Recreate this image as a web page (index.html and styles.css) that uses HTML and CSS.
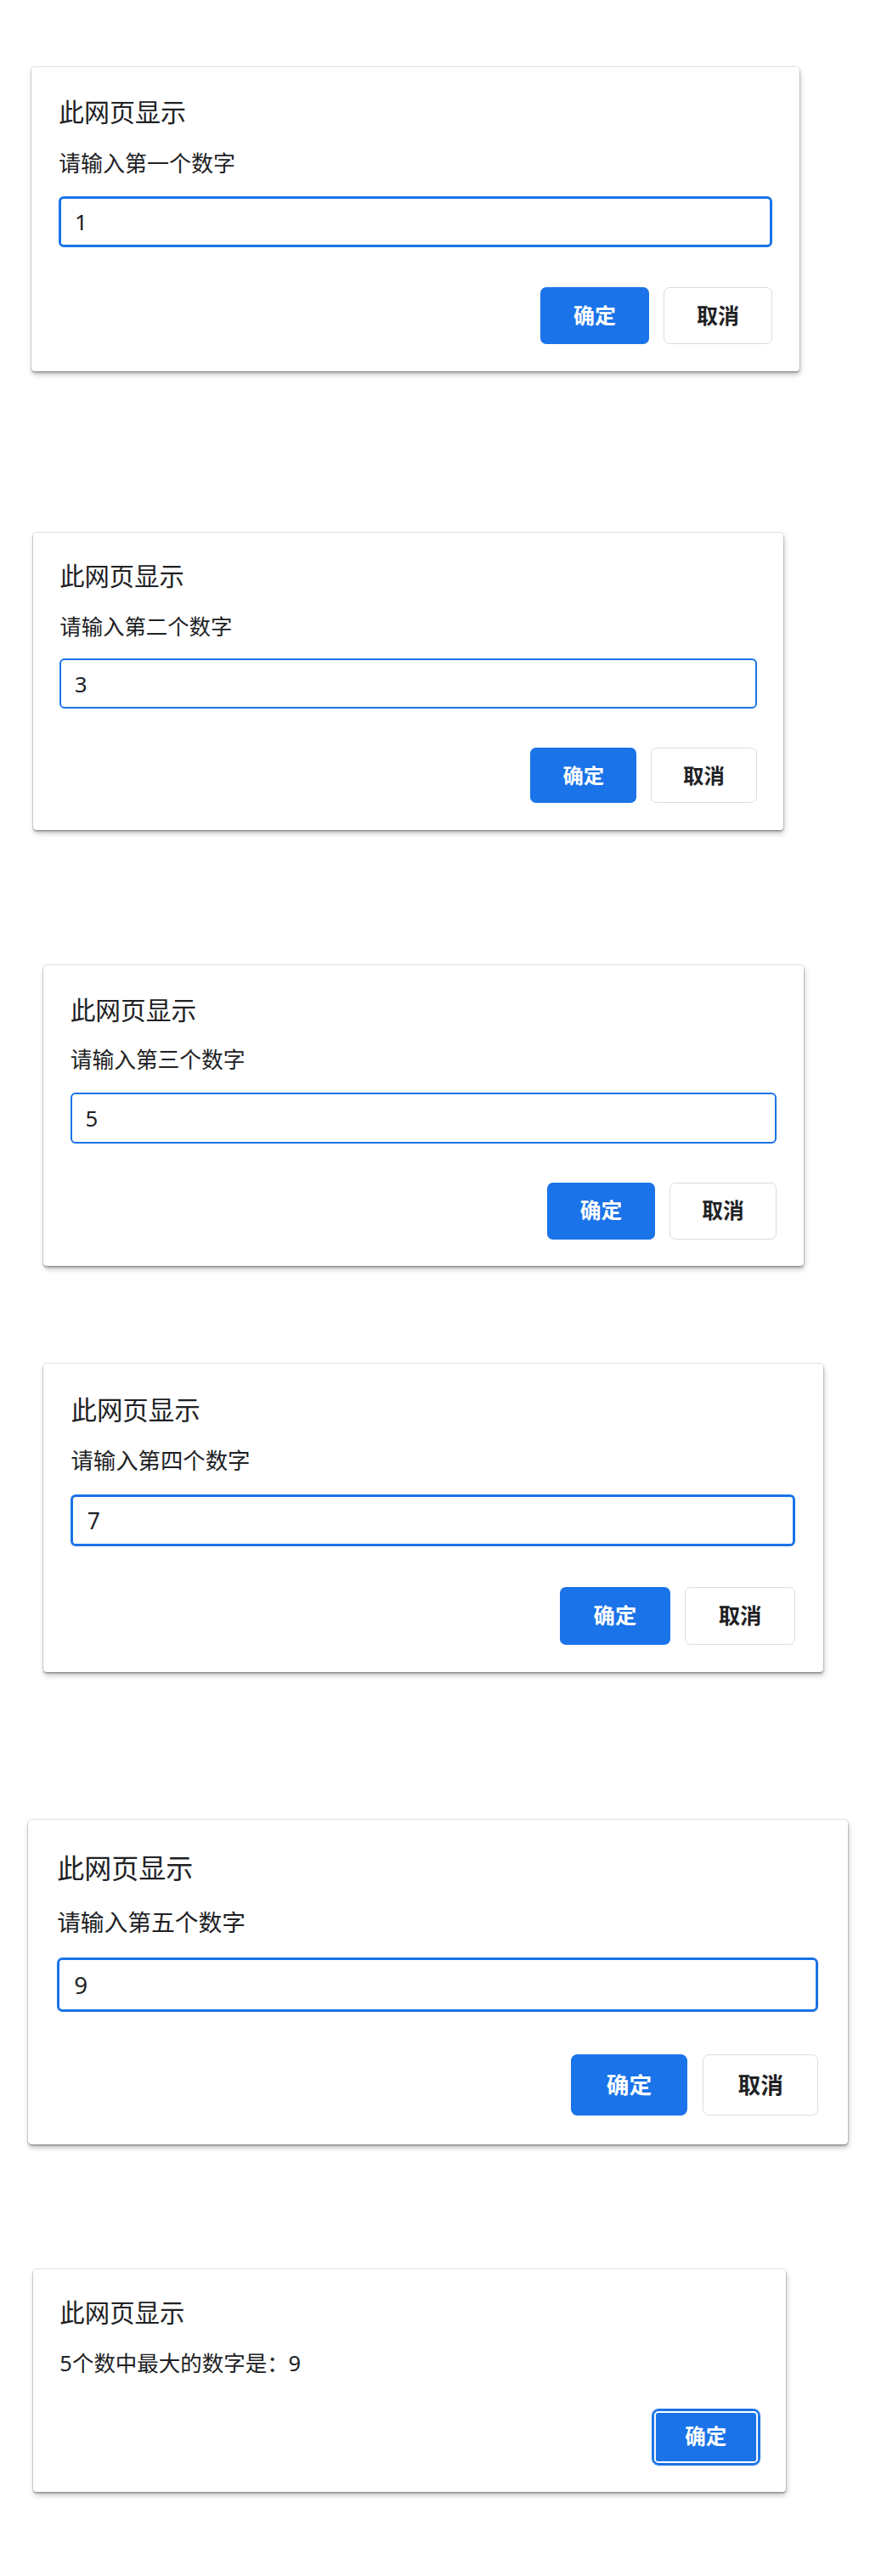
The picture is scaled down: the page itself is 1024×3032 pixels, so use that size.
FILE: index.html
```html
<!DOCTYPE html>
<html lang="zh-CN">
<head>
<meta charset="utf-8">
<title>此网页显示</title>
<link rel="stylesheet" href="styles.css">
</head>
<body>
<main class="page">
  <section class="shot shot-1">
    <div class="dialog">
      <h2 class="title">此网页显示</h2>
      <p class="message">请输入第一个数字</p>
      <div class="field">1</div>
      <div class="actions">
        <button class="btn btn-primary">确定</button>
        <button class="btn btn-secondary">取消</button>
      </div>
    </div>
  </section>
  <section class="shot shot-2">
    <div class="dialog">
      <h2 class="title">此网页显示</h2>
      <p class="message">请输入第二个数字</p>
      <div class="field">3</div>
      <div class="actions">
        <button class="btn btn-primary">确定</button>
        <button class="btn btn-secondary">取消</button>
      </div>
    </div>
  </section>
  <section class="shot shot-3">
    <div class="dialog">
      <h2 class="title">此网页显示</h2>
      <p class="message">请输入第三个数字</p>
      <div class="field">5</div>
      <div class="actions">
        <button class="btn btn-primary">确定</button>
        <button class="btn btn-secondary">取消</button>
      </div>
    </div>
  </section>
  <section class="shot shot-4">
    <div class="dialog">
      <h2 class="title">此网页显示</h2>
      <p class="message">请输入第四个数字</p>
      <div class="field">7</div>
      <div class="actions">
        <button class="btn btn-primary">确定</button>
        <button class="btn btn-secondary">取消</button>
      </div>
    </div>
  </section>
  <section class="shot shot-5">
    <div class="dialog">
      <h2 class="title">此网页显示</h2>
      <p class="message">请输入第五个数字</p>
      <div class="field">9</div>
      <div class="actions">
        <button class="btn btn-primary">确定</button>
        <button class="btn btn-secondary">取消</button>
      </div>
    </div>
  </section>
  <section class="shot shot-6">
    <div class="dialog dialog-alert">
      <h2 class="title">此网页显示</h2>
      <p class="message">5个数中最大的数字是：9</p>
      <div class="actions">
        <button class="btn btn-primary btn-focused">确定</button>
      </div>
    </div>
  </section>
</main>
</body>
</html>
```

FILE: styles.css
```css
html, body {
  margin: 0;
  padding: 0;
  background: #ffffff;
}

body {
  font-family: "Noto Sans", "Noto Sans CJK SC", sans-serif;
  color: #202124;
}

.page {
  display: flex;
  flex-direction: column;
  padding-top: 79px;
}

.shot {
  --k: 1;
  display: flex;
  align-items: flex-start;
  box-sizing: border-box;
}

.shot-1 { --k: 1;     height: 548px; padding-left: 37px; }
.shot-2 { --k: 0.977; height: 509px; padding-left: 39px; }
.shot-3 { --k: 0.99;  height: 469px; padding-left: 51px; }
.shot-4 { --k: 1.015; height: 537px; padding-left: 51px; }
.shot-5 { --k: 1.067; height: 529px; padding-left: 33px; }
.shot-6 { --k: 0.98;  height: 361px; padding-left: 39px; }

.dialog {
  box-sizing: border-box;
  width: calc(904px * var(--k));
  padding: calc(38px * var(--k)) calc(32px * var(--k)) calc(32px * var(--k));
  background: #ffffff;
  border-radius: calc(4px * var(--k));
  box-shadow:
    0 0 0 1px rgba(0, 0, 0, 0.10),
    0 2px 2px rgba(0, 0, 0, 0.22),
    1px 4px 6px rgba(0, 0, 0, 0.22);
  display: flex;
  flex-direction: column;
}

.title {
  margin: 0 0 calc(32px * var(--k));
  font-size: calc(30px * var(--k));
  line-height: 1;
  font-weight: 400;
  color: #202124;
}

.message {
  margin: 0 0 calc(26px * var(--k));
  font-size: calc(26px * var(--k));
  line-height: 1;
  color: #202124;
}

.dialog-alert .message {
  margin-bottom: calc(42px * var(--k));
}

.field {
  box-sizing: border-box;
  height: calc(60px * var(--k));
  border: calc(3px * var(--k)) solid #1a73e8;
  border-radius: calc(6px * var(--k));
  padding: 0 calc(16px * var(--k));
  display: flex;
  align-items: center;
  font-size: calc(26px * var(--k));
  color: #202124;
}

.actions {
  display: flex;
  justify-content: flex-end;
  gap: calc(17px * var(--k));
  margin-top: calc(47px * var(--k));
}

.dialog-alert .actions {
  margin-top: 0;
}

.btn {
  box-sizing: border-box;
  width: calc(128px * var(--k));
  height: calc(67px * var(--k));
  border-radius: calc(7px * var(--k));
  font-family: "Noto Sans", "Noto Sans CJK SC", sans-serif;
  font-size: calc(25px * var(--k));
  font-weight: 700;
  line-height: 1;
  padding: 0;
  display: flex;
  align-items: center;
  justify-content: center;
}

.btn-primary {
  background: #1a73e8;
  color: #ffffff;
  border: none;
}

.btn-secondary {
  background: #ffffff;
  color: #202124;
  border: 1px solid #dadce0;
}

.btn-focused {
  outline: calc(2px * var(--k)) solid #1a73e8;
  outline-offset: 0;
  box-shadow:
    inset 0 0 0 calc(2px * var(--k)) #1a73e8,
    inset 0 0 0 calc(4px * var(--k)) #ffffff;
}
```
